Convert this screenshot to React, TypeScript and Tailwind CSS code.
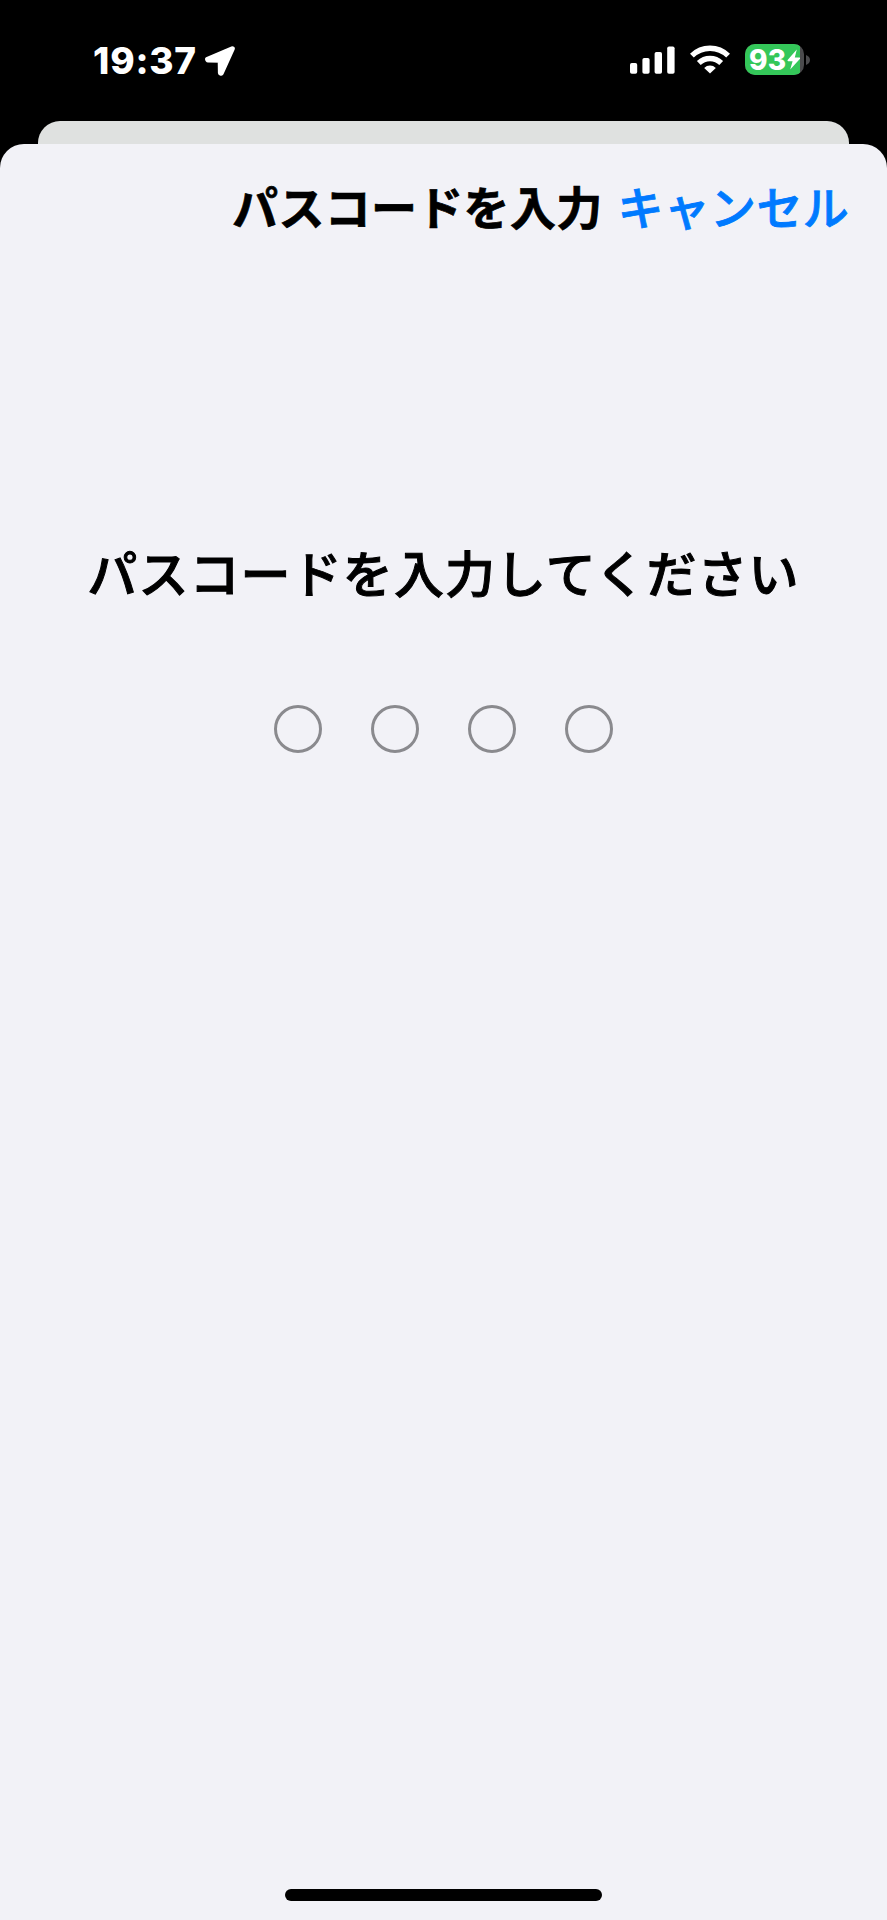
const PASSCODE_LENGTH = 4

function LocationArrow() {
    return (
        <svg width="33" height="34" viewBox="0 0 33 34" className="fill-white stroke-white" strokeWidth="5" strokeLinejoin="round">
            <path d="M29.3 4.8 L4.6 15.4 L5 16 L17.2 16.2 L17.4 29 L18.2 29.2 Z" />
        </svg>
    )
}

function CellularIcon() {
    return (
        <svg width="45" height="28" viewBox="0 0 45 28" className="fill-white">
            <rect x="0" y="17" width="7.2" height="10.8" rx="1.8" />
            <rect x="12.4" y="12" width="7.2" height="15.8" rx="1.8" />
            <rect x="24.6" y="6" width="7.4" height="21.8" rx="1.8" />
            <rect x="37.2" y="0.4" width="7.4" height="27.4" rx="1.8" />
        </svg>
    )
}

function WifiIcon() {
    return (
        <svg width="40" height="30" viewBox="0 0 40 30" fill="none" stroke="white" strokeWidth="5.4">
            <path d="M1.9 10.7 A25.8 25.8 0 0 1 38.1 10.7" />
            <path d="M8.8 18 A16 16 0 0 1 31.2 18" />
            <path d="M20 28.6 L14.2 22.9 A8.4 8.4 0 0 1 25.8 22.9 Z" fill="white" stroke="none" />
        </svg>
    )
}

function Battery({ level }: { level: number }) {
    return (
        <div className="flex items-center gap-[2px]">
            <div className="relative flex h-[31px] w-[59px] overflow-hidden rounded-[10px] bg-[#4b4b4d]">
                <div className="h-full bg-[#34c759]" style={{ width: `${level}%` }} />
                <div className="absolute inset-0 flex items-center pl-[4px]">
                    <span className="w-[38px] font-['Inter'] text-[28px] leading-none font-extrabold tracking-[0.2px] text-white">{level}</span>
                    <svg width="14" height="21" viewBox="0 0 14 21" className="fill-white">
                        <path d="M9.8 0.4 L0.6 11 Q0.1 12 1.2 12.2 L5.6 12.2 L3.2 20.4 L13 9.8 Q13.5 8.6 12.4 8.5 L7.8 8.5 Z" />
                    </svg>
                </div>
            </div>
            <svg width="4" height="10" viewBox="0 0 4 10" className="fill-[#4b4b4d]">
                <path d="M0 0 Q4 1.6 4 5 Q4 8.4 0 10 Z" />
            </svg>
        </div>
    )
}

function StatusBar() {
    return (
        <div className="flex h-[121px] items-start justify-between pt-[44px] pr-[77px] pl-[93px]">
            <div className="flex items-center">
                <span className="w-[110px] font-['Inter'] text-[37px] leading-[32px] font-extrabold tracking-[0.8px] text-white">19:37</span>
                <LocationArrow />
            </div>
            <div className="flex items-center">
                <CellularIcon />
                <div className="ml-[15px]">
                    <WifiIcon />
                </div>
                <div className="ml-[15px]">
                    <Battery level={93} />
                </div>
            </div>
        </div>
    )
}

export default function App() {
    return (
        <div className="flex h-[1920px] w-[887px] flex-col overflow-hidden bg-black font-['Noto_Sans_CJK_JP',sans-serif]" lang="ja">
            <StatusBar />
            <div className="mx-[38px] h-[23px] rounded-t-[22px] bg-[#dfe1e0]" />
            <main className="flex flex-1 flex-col items-center rounded-t-[24px] bg-[#f2f2f7]">
                <header className="flex h-[122px] w-full items-center justify-end gap-[15px] pr-[38px]">
                    <h1 className="text-[46px] leading-none font-bold tracking-[0.3px] whitespace-nowrap text-black [-webkit-text-stroke:0.7px_black]">パスコードを入力</h1>
                    <button className="text-[46px] leading-none font-medium tracking-[0.3px] whitespace-nowrap text-[#007aff] [-webkit-text-stroke:0.8px_#007aff]">キャンセル</button>
                </header>

                <p className="mt-[279px] text-[50px] leading-[52px] font-medium tracking-[1.1px] whitespace-nowrap text-black [-webkit-text-stroke:1px_black]">
                    パスコードを入力してください
                </p>

                <div className="mt-[108px] flex gap-[49px]">
                    {Array.from({ length: PASSCODE_LENGTH }).map((_, i) => (
                        <span key={i} className="h-[48px] w-[48px] rounded-full border-3 border-[#8a8a8e]" />
                    ))}
                </div>

                <div className="mt-auto mb-[19px] h-[12px] w-[317px] rounded-full bg-black" />
            </main>
        </div>
    )
}
